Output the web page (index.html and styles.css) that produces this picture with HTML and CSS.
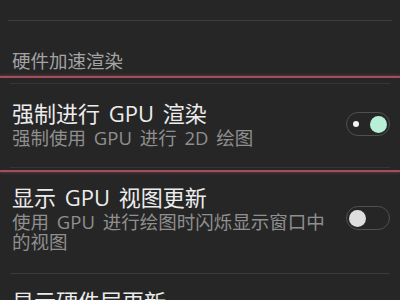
FILE: index.html
```html
<!DOCTYPE html>
<html lang="zh-CN">
<head>
    <meta charset="UTF-8">
    <meta name="viewport" content="width=device-width, initial-scale=1.0">
    <title>开发者选项</title>
    <link rel="stylesheet" href="styles.css">
</head>
<body>
    <div class="main">
        <div class="top-row"></div>

        <div class="category">硬件加速渲染</div>

        <div class="selected">
            <div class="rule dark"></div>
            <div class="item first">
                <div class="text">
                    <p class="title">强制进行 GPU 渲染</p>
                    <p class="desc">强制使用 GPU 进行 2D 绘图</p>
                </div>
                <div class="switch on"><span class="dot"></span><span class="knob"></span></div>
            </div>
            <div class="rule dark"></div>
        </div>

        <div class="item">
            <div class="text">
                <p class="title">显示 GPU 视图更新</p>
                <p class="desc">使用 GPU 进行绘图时闪烁显示窗口中的视图</p>
            </div>
            <div class="switch"><span class="knob"></span></div>
        </div>
        <div class="rule"></div>

        <div class="item last">
            <div class="text">
                <p class="title">显示硬件层更新</p>
            </div>
        </div>
    </div>
</body>
</html>
```

FILE: styles.css
```css
* {
    margin: 0;
    padding: 0;
}

body {
    background-color: #262626;
    font-family: "Open Sans", "Noto Sans CJK SC", sans-serif;
    word-spacing: 3px;
    overflow: hidden;
}

.main {
    width: 400px;
}

.top-row {
    height: 20px;
    margin: 0 8px;
    border-bottom: 1px solid #3e3e3e;
}

.category {
    padding: 27px 12px 3px;
    line-height: 25px;
    font-size: 18.5px;
    color: #a3a3a3;
}

/* 选中行上下的红线 */
.selected {
    border-top: 2px solid #a24f5d;
    border-bottom: 2px solid #a24f5d;
    box-shadow: 0 -1px 2px rgba(190, 80, 100, 0.35), 0 1px 2px rgba(190, 80, 100, 0.35);
    padding-top: 5px;
    padding-bottom: 2px;
}

.rule {
    height: 1px;
    margin: 0 10px;
    background-color: #3a3a3a;
}

.rule.dark {
    background-color: #333835;
}

.item {
    display: flex;
    align-items: center;
    padding: 12px 10px 21px 12px;
}

.item.first {
    padding-top: 16px;
    padding-bottom: 19px;
}

.item.last {
    padding-top: 14px;
}

.item .text {
    flex: 1;
    margin-right: 12px;
}

.title {
    font-size: 22px;
    line-height: 26px;
    color: #ececec;
}

.desc {
    margin-top: 2px;
    font-size: 18.5px;
    line-height: 20px;
    color: #8f8f8f;
}

.switch {
    width: 44px;
    height: 24px;
    box-sizing: border-box;
    border: 1.5px solid #505050;
    border-radius: 12px;
    display: flex;
    align-items: center;
    padding: 0 2px;
    flex-shrink: 0;
}

.switch .knob {
    width: 17px;
    height: 17px;
    border-radius: 50%;
    background-color: #dedede;
}

.switch.on {
    justify-content: space-between;
    padding: 0 2px 0 6px;
}

.switch.on .dot {
    width: 6px;
    height: 6px;
    border-radius: 50%;
    background-color: #f4f4f4;
}

.switch.on .knob {
    background-color: #b7f0d6;
}
```
